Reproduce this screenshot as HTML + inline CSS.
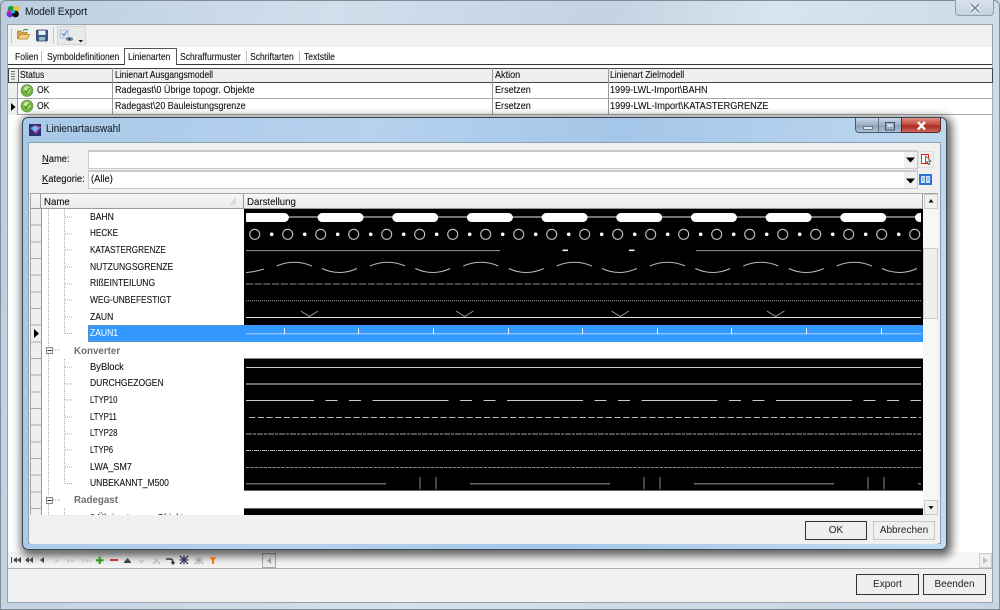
<!DOCTYPE html>
<html><head><meta charset="utf-8"><title>Modell Export</title>
<style>
html,body{margin:0;padding:0;background:#fff}
#r{position:relative;width:1000px;height:610px;overflow:hidden;font-family:"Liberation Sans",sans-serif;color:#222;background:linear-gradient(100deg,#bccede 0%,#d0dfec 30%,#c3d3e2 55%,#d8e4ef 70%,#c8d8e6 100%);filter:blur(.3px)}
.a{position:absolute;box-sizing:border-box}
.t{position:absolute;font-size:10.2px;line-height:14px;white-space:nowrap;transform:scaleX(.84);transform-origin:left center;color:#151515;-webkit-text-stroke:.12px #151515}
.w{transform:scaleX(.89)}
.g{font-weight:bold;color:#6e6e6e;font-size:10.5px;transform:scaleX(.93);-webkit-text-stroke:0}
.hd{background:linear-gradient(#f6f6f6,#ececec);border-right:1px solid #999}
.btn{position:absolute;box-sizing:border-box;background:#efefef;text-align:center;font-size:10px;color:#222}
svg{position:absolute;left:0;top:0;overflow:visible}
</style></head><body><div id="r">

<!-- main window client -->
<div class="a" style="left:7px;top:24px;width:986px;height:579px;background:#fff;border:1px solid #97a3ad"></div>
<div class="a" style="left:8px;top:25px;width:984px;height:22px;background:#f0f0f0"></div>
<div class="a" style="left:8px;top:64px;width:984px;height:1px;background:#333"></div>
<div class="a" style="left:8px;top:568px;width:984px;height:34px;background:#f0f0f0;border-top:1px solid #b0b0b0"></div>
<div class="a" style="left:0;top:603px;width:1000px;height:7px;background:linear-gradient(90deg,#c3d3e2,#d5e1ec 40%,#c5d5e3)"></div>
<div class="a" style="left:0;top:0;width:1000px;height:610px;border:1px solid #7f8b96;border-radius:6px 6px 0 0"></div>
<span class="t" style="left:25px;top:5px;font-size:11px;transform:scaleX(.925);color:#1c2a38">Modell Export</span>

<!-- main close -->
<div class="a" style="left:955px;top:0;width:39px;height:16px;background:linear-gradient(#d8e2eb,#c4d2df);border:1px solid #8f9eac;border-top:0;border-radius:0 0 4px 4px"></div>

<!-- toolbar bits -->
<div class="a" style="left:57px;top:26px;width:29px;height:19px;background:#e9e9e9;border:1px solid #d5d5d5"></div>
<div class="a" style="left:11px;top:28px;width:1px;height:15px;background:#c8c8c8"></div>
<div class="a" style="left:53px;top:27px;width:1px;height:17px;background:#c8c8c8"></div>

<!-- tabs -->
<span class="t" style="left:15px;top:51px">Folien</span>
<span class="t" style="left:47px;top:51px">Symboldefinitionen</span>
<div class="a" style="left:124px;top:48px;width:53px;height:17px;background:#fff;border:1px solid #555;border-bottom:0"></div>
<span class="t" style="left:128px;top:51px">Linienarten</span>
<span class="t" style="left:180px;top:51px">Schraffurmuster</span>
<span class="t" style="left:250px;top:51px">Schriftarten</span>
<span class="t" style="left:304px;top:51px">Textstile</span>
<div class="a" style="left:41px;top:51px;width:1px;height:11px;background:#bbb"></div>
<div class="a" style="left:246px;top:51px;width:1px;height:11px;background:#bbb"></div>
<div class="a" style="left:299px;top:51px;width:1px;height:11px;background:#bbb"></div>

<!-- main grid -->
<div class="a" style="left:8px;top:68px;width:985px;height:15px;background:#efefef;border:1px solid #444"></div>
<div class="a" style="left:8px;top:83px;width:985px;height:16px;background:#fff;border-bottom:1px solid #aaa;border-right:1px solid #aaa"></div>
<div class="a" style="left:8px;top:99px;width:985px;height:16px;background:#fff;border-bottom:1px solid #aaa;border-right:1px solid #aaa"></div>
<div class="a" style="left:8px;top:83px;width:10px;height:32px;background:#efefef;border-right:1px solid #999"></div>
<div class="a" style="left:8px;top:98px;width:10px;height:1px;background:#aaa"></div>
<div class="a" style="left:112px;top:68px;width:1px;height:47px;background:#999"></div>
<div class="a" style="left:492px;top:68px;width:1px;height:47px;background:#999"></div>
<div class="a" style="left:608px;top:68px;width:1px;height:47px;background:#999"></div>
<div class="a" style="left:18px;top:68px;width:1px;height:15px;background:#666"></div>
<span class="t" style="left:20px;top:69px">Status</span>
<span class="t" style="left:115px;top:69px">Linienart Ausgangsmodell</span>
<span class="t w" style="left:495px;top:69px">Aktion</span>
<span class="t" style="left:610px;top:69px">Linienart Zielmodell</span>
<span class="t" style="left:37px;top:84px">OK</span>
<span class="t w" style="left:115px;top:84px">Radegast\0 Übrige topogr. Objekte</span>
<span class="t w" style="left:495px;top:84px">Ersetzen</span>
<span class="t w" style="left:610px;top:84px">1999-LWL-Import\BAHN</span>
<span class="t" style="left:37px;top:100px">OK</span>
<span class="t" style="left:115px;top:100px;transform:scaleX(.87)">Radegast\20 Bauleistungsgrenze</span>
<span class="t w" style="left:495px;top:100px">Ersetzen</span>
<span class="t" style="left:610px;top:100px;transform:scaleX(.9)">1999-LWL-Import\KATASTERGRENZE</span>

<!-- nav strip -->
<div class="a" style="left:8px;top:552px;width:254px;height:16px;background:#f4f4f4"></div>
<div class="a" style="left:275px;top:552px;width:704px;height:16px;background:#f6f6f6"></div>
<div class="a" style="left:262px;top:553px;width:14px;height:15px;background:#efefef;border:1px solid #aaa"></div>
<div class="a" style="left:979px;top:553px;width:13px;height:15px;background:#efefef;border:1px solid #ccc"></div>
<div class="btn" style="left:856px;top:574px;width:63px;height:21px;border:1px solid #333;line-height:19px">Export</div>
<div class="btn" style="left:923px;top:574px;width:63px;height:21px;border:1px solid #333;line-height:19px">Beenden</div>

<!-- dialog -->
<div class="a" style="left:22px;top:117px;width:925px;height:433px;border-radius:6px;border:1px solid #3d4a55;background:linear-gradient(100deg,#a9c9e8 0%,#b5d2ee 35%,#a4c6e8 60%,#c4dcf2 100%);box-shadow:2px 3px 9px 3px rgba(0,0,0,.62)"></div>
<div class="a" style="left:28px;top:142px;width:913px;height:402px;background:#f0f0f0;border:1px solid #8da0b2"></div>
<span class="t" style="left:46px;top:122px;font-size:11px;transform:scaleX(.9);color:#22303c">Linienartauswahl</span>

<!-- dialog caption buttons -->
<div class="a" style="left:855px;top:118px;width:47px;height:15px;background:linear-gradient(#c6d6e6,#9cb0c6 50%,#8ba2ba 55%,#b0c2d4);border:1px solid #45596d;border-top:0;border-radius:0 0 0 4px"></div>
<div class="a" style="left:878px;top:118px;width:1px;height:14px;background:#5f7386"></div>
<div class="a" style="left:901px;top:118px;width:40px;height:15px;background:linear-gradient(#dd8f83,#c3483a 50%,#a82a1f 55%,#c9695c);border:1px solid #5c2a2a;border-top:0;border-radius:0 0 4px 0"></div>

<!-- labels and combos -->
<span class="t" style="left:42px;top:153px;transform:scaleX(.92)"><u>N</u>ame:</span>
<span class="t" style="left:42px;top:173px;transform:scaleX(.92)"><u>K</u>ategorie:</span>
<div class="a" style="left:88px;top:150px;width:830px;height:19px;background:#fff;border:1px solid #c9c9c9;border-width:2px 1px 1px 1px"></div>
<div class="a" style="left:88px;top:170px;width:830px;height:19px;background:#fff;border:1px solid #c9c9c9;border-width:2px 1px 1px 1px"></div>
<span class="t" style="left:91px;top:173px;transform:scaleX(.92)">(Alle)</span>
<div class="a" style="left:904px;top:152px;width:13px;height:16px;background:#f0f0f0"></div>
<div class="a" style="left:904px;top:172px;width:13px;height:16px;background:#f0f0f0"></div>
<div class="a" style="left:918px;top:151px;width:16px;height:17px;background:#f0f0f0;border:1px solid #ddd"></div>

<!-- dialog grid -->
<div class="a" style="left:30px;top:193px;width:908px;height:322px;background:#fff;border:1px solid #a8a8a8;border-bottom:0"></div>
<div class="a hd" style="left:31px;top:194px;width:10px;height:15px;border-bottom:1px solid #999"></div>
<div class="a hd" style="left:41px;top:194px;width:203px;height:15px;border-bottom:1px solid #999"></div>
<div class="a hd" style="left:244px;top:194px;width:679px;height:15px;border-bottom:1px solid #999"></div>
<span class="t" style="left:44px;top:195px;font-size:10.5px;transform:scaleX(.92)">Name</span>
<span class="t" style="left:247px;top:195px;font-size:10.5px;transform:scaleX(.92)">Darstellung</span>
<div class="a" style="left:31px;top:209px;width:10px;height:306px;background:repeating-linear-gradient(#efefef 0,#efefef 15.67px,#a8a8a8 15.67px,#a8a8a8 16.67px);border-right:1px solid #999;box-sizing:content-box"></div>

<!-- scrollbar -->
<div class="a" style="left:923px;top:194px;width:15px;height:321px;background:#f7f7f7"></div>
<div class="a" style="left:924px;top:194px;width:14px;height:15px;background:#f0f0f0;border:1px solid #ccc"></div>
<div class="a" style="left:923px;top:248px;width:15px;height:71px;background:#efefef;border:1px solid #ccc"></div>
<div class="a" style="left:924px;top:500px;width:14px;height:15px;background:#f0f0f0;border:1px solid #ccc"></div>

<!-- preview backgrounds -->
<div class="a" style="left:244px;top:209px;width:679px;height:116px;background:#000"></div>
<div class="a" style="left:244px;top:358px;width:679px;height:133px;background:#000;border-top:1px solid #888;border-bottom:1px solid #666"></div>
<div class="a" style="left:244px;top:508px;width:679px;height:7px;background:#000;border-top:1px solid #666"></div>
<div class="a" style="left:88px;top:325px;width:835px;height:16.5px;background:#3399ff"></div>

<!-- clipped last row label -->
<div class="a" style="left:85px;top:508px;width:150px;height:7px;overflow:hidden"><span class="t w" style="left:5px;top:4px">0 Übrige topogr. Objekte</span></div>
<div class="a" style="left:30px;top:515px;width:908px;height:29px;background:#f0f0f0"></div>

<!-- tree labels -->
<span class="t" style="left:90px;top:211px">BAHN</span>
<span class="t" style="left:90px;top:227px;transform:scaleX(.8)">HECKE</span>
<span class="t" style="left:90px;top:244px;transform:scaleX(.8)">KATASTERGRENZE</span>
<span class="t" style="left:90px;top:261px">NUTZUNGSGRENZE</span>
<span class="t" style="left:90px;top:277px">RIßEINTEILUNG</span>
<span class="t" style="left:90px;top:294px;transform:scaleX(.82)">WEG-UNBEFESTIGT</span>
<span class="t" style="left:90px;top:311px">ZAUN</span>
<span class="t" style="left:90px;top:327px;color:#fff;-webkit-text-stroke:0">ZAUN1</span>
<span class="t g" style="left:74px;top:344px">Konverter</span>
<span class="t" style="left:90px;top:361px;transform:scaleX(.92)">ByBlock</span>
<span class="t" style="left:90px;top:377px">DURCHGEZOGEN</span>
<span class="t" style="left:90px;top:394px;transform:scaleX(.76)">LTYP10</span>
<span class="t" style="left:90px;top:411px;transform:scaleX(.76)">LTYP11</span>
<span class="t" style="left:90px;top:427px;transform:scaleX(.76)">LTYP28</span>
<span class="t" style="left:90px;top:444px;transform:scaleX(.76)">LTYP6</span>
<span class="t" style="left:90px;top:461px;transform:scaleX(.88)">LWA_SM7</span>
<span class="t" style="left:90px;top:477px">UNBEKANNT_M500</span>
<span class="t g" style="left:74px;top:493px">Radegast</span>

<!-- dialog buttons -->
<div class="btn" style="left:805px;top:521px;width:62px;height:19px;border:1px solid #333;line-height:17px">OK</div>
<div class="btn" style="left:873px;top:521px;width:62px;height:19px;border:1px solid #c8c8c8;line-height:17px">Abbrechen</div>

<svg width="1000" height="610" viewBox="0 0 1000 610">
<defs><clipPath id="c"><rect x="246" y="209" width="675" height="306"/></clipPath></defs>

<!-- tree dotted lines -->
<g stroke="#aaa" stroke-width="1" stroke-dasharray="1 1" fill="none">
<path d="M48.5 209V346M48.5 354V496M48.5 504V515M64.5 209V333.5M64.5 359V483.5M64.5 508V515"/>
<path d="M65 217H73M65 234H73M65 250H73M65 267H73M65 284H73M65 300H73M65 317H73M65 333.5H73M65 367H73M65 384H73M65 400H73M65 417H73M65 434H73M65 450H73M65 467H73M65 483.5H73M53 350H60M53 500H60"/>
</g>
<g fill="#f4f4f4" stroke="#888"><rect x="46.5" y="347.5" width="6" height="6"/><rect x="46.5" y="497.5" width="6" height="6"/></g>
<path d="M47.5 350.5H51.5M47.5 500.5H51.5" stroke="#333"/>
<rect x="88.5" y="325.5" width="155" height="16" fill="none" stroke="#a08060" stroke-dasharray="1 1" opacity=".7"/>
<path d="M34 329L39 333.5L34 338Z" fill="#000"/>
<path d="M231 204L235 199L235 204Z" fill="#e8e8e8" stroke="#bbb" stroke-width=".6"/>

<!-- line previews -->
<g clip-path="url(#c)" fill="none">
<path d="M246 217H921" stroke="#e6e6e6"/>
<path d="M247.4 217.5H925" stroke="#fff" stroke-width="9" stroke-linecap="round" stroke-dasharray="37 37.67"/>
<g stroke="#c4c4c4" stroke-width="1.1">
<circle cx="254.7" cy="234.3" r="5"/><circle cx="287.7" cy="234.3" r="5"/><circle cx="320.7" cy="234.3" r="5"/><circle cx="353.7" cy="234.3" r="5"/><circle cx="386.7" cy="234.3" r="5"/><circle cx="419.7" cy="234.3" r="5"/><circle cx="452.7" cy="234.3" r="5"/><circle cx="485.7" cy="234.3" r="5"/><circle cx="518.7" cy="234.3" r="5"/><circle cx="551.7" cy="234.3" r="5"/><circle cx="584.7" cy="234.3" r="5"/><circle cx="617.7" cy="234.3" r="5"/><circle cx="650.7" cy="234.3" r="5"/><circle cx="683.7" cy="234.3" r="5"/><circle cx="716.7" cy="234.3" r="5"/><circle cx="749.7" cy="234.3" r="5"/><circle cx="782.7" cy="234.3" r="5"/><circle cx="815.7" cy="234.3" r="5"/><circle cx="848.7" cy="234.3" r="5"/><circle cx="881.7" cy="234.3" r="5"/><circle cx="914.7" cy="234.3" r="5"/>
</g>
<path d="M271.7 234.3H921" stroke="#fff" stroke-width="3.6" stroke-linecap="round" stroke-dasharray="0 33"/>
<path d="M246 250.6H500M696 250.6H921" stroke="#999"/>
<path d="M562.5 250.3H568M629 250.3H634.5" stroke="#eee" stroke-width="1.6"/>
<path stroke="#bbb" stroke-width="1" d="M246 272.5Q255 272 264 269M276.7 266q17.5 -7.4 35 0M370 266q17.5 -7.4 35 0M463.4 266q17.5 -7.4 35 0M556.7 266q17.5 -7.4 35 0M650 266q17.5 -7.4 35 0M743.4 266q17.5 -7.4 35 0M836.7 266q17.5 -7.4 35 0M322 268.5q17.5 8 35 0M415.3 268.5q17.5 8 35 0M508.7 268.5q17.5 8 35 0M602 268.5q17.5 8 35 0M695.3 268.5q17.5 8 35 0M788.7 268.5q17.5 8 35 0M882 268.5q17.5 8 35 0"/>
<path d="M246 284H921" stroke="#8c8c8c" stroke-dasharray="7 1.7"/>
<path d="M246 300.7H921" stroke="#a8a8a8" stroke-dasharray="1 1"/>
<path d="M246 317.5H921" stroke="#ddd"/>
<path stroke="#999" d="M300.7 311l8.7 5.5l8.7 -5.5M456 311l8.7 5.5l8.7 -5.5M611.5 311l8.7 5.5l8.7 -5.5M767 311l8.7 5.5l8.7 -5.5"/>
<path d="M246 333.8H921" stroke="#9fd0ff" stroke-width="1.2"/>
<path stroke="#eaf4ff" d="M284.5 328V334M358.5 328V334M433.5 328V334M508.5 328V334M582.5 328V334M657.5 328V334M731.5 328V334M806.5 328V334M881.5 328V334"/>
<path d="M246 367.5H921" stroke="#c8c8c8"/>
<path d="M246 384H921" stroke="#6f6f6f" stroke-width="2"/>
<path d="M238 400.5H921" stroke="#c8c8c8" stroke-dasharray="76 11.5 12 11.5 12 11.5"/>
<path d="M249 417.5H921" stroke="#bbb" stroke-dasharray="6.3 2.4"/>
<path d="M246 434H921" stroke="#6c6c6c" stroke-width="1.4" stroke-dasharray="6 1 3 1"/>
<path d="M246 450.5H921" stroke="#aaa" stroke-dasharray="5 1 1 1"/>
<path d="M246 467.5H921" stroke="#888" stroke-dasharray="3.4 1"/>
<path d="M246 483.8H386M470 483.8H610M694 483.8H834M918 483.8H921" stroke="#888" stroke-width="1.2"/>
<path d="M420 477V489M436 477V489M644 477V489M660 477V489M868 477V489M884 477V489" stroke="#888" stroke-width="1"/>
</g>

<!-- scroll arrows, combo arrows -->
<path d="M928.5 202.5L931 199L933.5 202.5ZM928.5 506L931 509.5L933.5 506Z" fill="#111"/>
<path d="M906 157.5L915 157.5L910.5 162.5ZM906 178.5L915 178.5L910.5 183.5Z" fill="#000"/>

<!-- pick icon -->
<rect x="921.5" y="154.5" width="7" height="9" fill="#fff" stroke="#f02020"/>
<path d="M925.5 156L925.5 163L927 161.5L928.5 164.5L930 164L928.7 161L931 161Z" fill="#fff" stroke="#333" stroke-width=".7"/>
<!-- book icon -->
<rect x="919" y="174" width="13" height="11" fill="#2a76d6"/>
<path d="M921 176H925V183H921ZM926 176H930V183H926Z" fill="#cfe4fa"/>
<path d="M922 178H924M922 180H924M927 178H929M927 180H929" stroke="#3a78c8" stroke-width=".8"/>

<!-- caption glyphs -->
<rect x="863.5" y="126.5" width="9" height="3" fill="#dfe8f0" stroke="#55677a" stroke-width=".8"/>
<rect x="885.5" y="122.5" width="9" height="7.5" fill="none" stroke="#3f5468" stroke-width="1"/>
<rect x="887.5" y="124.5" width="5" height="2" fill="#e4ecf4" stroke="none"/>
<path d="M918 122L925 129.5M925 122L918 129.5" stroke="#fff" stroke-width="2.3"/>
<path d="M971 4L979 12M979 4L971 12" stroke="#f4f7fa" stroke-width="4"/>
<path d="M971 4L979 12M979 4L971 12" stroke="#7d8a97" stroke-width="1.6" fill="none"/>

<!-- app logo -->
<g>
<circle cx="11" cy="9" r="3.2" fill="#14a03c"/><circle cx="16" cy="9" r="3" fill="#e6c414"/><circle cx="10" cy="14" r="3.4" fill="#7a28d8"/><circle cx="15.5" cy="14" r="3.4" fill="#101010"/><circle cx="13" cy="11.5" r="2" fill="#18b8d8"/><circle cx="9" cy="11" r="1.6" fill="#e02890"/>
</g>
<!-- dialog icon -->
<rect x="29" y="124" width="12" height="12" fill="#25356e"/>
<path d="M30 128L35 125L41 127L36 134Z" fill="#d638b8"/>
<path d="M31 128L35 126L39 128L35 132Z" fill="#58c8f0"/>

<!-- status icons -->
<g>
<circle cx="27" cy="90.5" r="5.8" fill="#78b83c" stroke="#6a9a48"/><circle cx="27" cy="89.5" r="3.4" fill="#c4e4a0"/>
<path d="M24.5 90.5L26.5 92.5L29.5 88" stroke="#3f8a20" stroke-width="1.3" fill="none"/>
<circle cx="27" cy="106" r="5.8" fill="#78b83c" stroke="#6a9a48"/><circle cx="27" cy="105" r="3.4" fill="#c4e4a0"/>
<path d="M24.5 106L26.5 108L29.5 103.5" stroke="#3f8a20" stroke-width="1.3" fill="none"/>
</g>
<path d="M11 103L15.5 107L11 111Z" fill="#000"/>
<path d="M11 71.5H15M11 74H15M11 76.5H15M11 79H15" stroke="#444" stroke-width=".8"/>

<!-- toolbar icons -->
<path d="M17.5 38V31H21L22 32.5H27V38Z" fill="#e0a850" stroke="#a87828" stroke-width=".8"/>
<path d="M18 39L20 34.5H29.5L27.5 39Z" fill="#f4cf80" stroke="#b08030" stroke-width=".8"/>
<path d="M23 31Q25 28.5 28 30" stroke="#38a048" stroke-width="1.1" fill="none"/>
<rect x="36.5" y="30" width="11" height="11" rx="1" fill="#3d5a86" stroke="#26395a" stroke-width=".8"/>
<rect x="38.5" y="30.5" width="7" height="4.5" fill="#e8eef6"/>
<rect x="39" y="37" width="6" height="3.6" fill="#9eb4d0"/>
<rect x="60" y="30" width="8" height="8" fill="#dfe8f6" stroke="#a4b6d0" stroke-width=".8"/>
<path d="M62 33.5L64 35.5L67 31" stroke="#4a78c0" fill="none"/>
<ellipse cx="69.5" cy="39" rx="3.8" ry="2" fill="#7088a0"/>
<circle cx="69.5" cy="39" r="1" fill="#333"/>
<path d="M78.5 40H83L80.7 42.5Z" fill="#111"/>

<!-- nav icons -->
<g fill="#444">
<path d="M11 557V563H12V557ZM17 557L13 560L17 563ZM21 557L17 560L21 563Z"/>
<path d="M29 557L25 560L29 563ZM33 557L29 560L33 563Z"/>
<path d="M44 557L40 560L44 563Z"/>
</g>
<g fill="#c6c6c6">
<path d="M55.5 557L59.5 560L55.5 563Z"/>
<path d="M67 557L71 560L67 563ZM71 557L75 560L71 563Z"/>
<path d="M82 557L86 560L82 563ZM86 557L90 560L86 563ZM90 557H91V563H90Z"/>
</g>
<path d="M96 560.3H103.5M99.7 556.5V564" stroke="#2f9a20" stroke-width="2.2"/>
<path d="M110 560H118" stroke="#c43a3a" stroke-width="2"/>
<path d="M124 562L127.5 558L131 562Z" fill="#444"/><path d="M124 562.5H131" stroke="#444"/>
<path d="M139 560L141.5 562.5L146 557.5" stroke="#c2c2c2" stroke-width="1.6" fill="none"/>
<path d="M153 557L160 564M160 557L153 564" stroke="#b8b8b8" stroke-width="1.4"/>
<path d="M166 559H170Q173 559 173 563M171.5 562L173 564L174.5 562" stroke="#333" stroke-width="1.4" fill="none"/>
<path d="M180 556L188 564M188 556L180 564M184 555.5V564.5M179.5 560H188.5" stroke="#111" stroke-width="1"/>
<circle cx="184" cy="560" r="1.5" fill="#2838a0"/>
<path d="M195 556L203 564M203 556L195 564M199 555.5V564.5M194.5 560H203.5" stroke="#a0a0a0" stroke-width="1"/>
<path d="M209.5 557H216.5L214 560.5V564H212V560.5Z" fill="#e87818"/>
<path d="M271 557L267 560.5L271 564Z" fill="#9a9a9a"/>
<path d="M983 557L988 560.5L983 564Z" fill="#c0c0c0"/>
</svg>
</div></body></html>
